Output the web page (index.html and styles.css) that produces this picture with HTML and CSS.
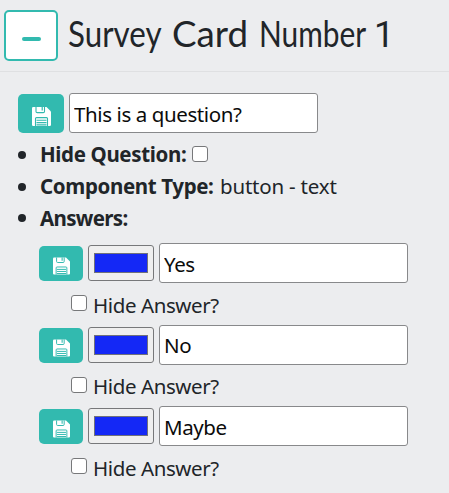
FILE: index.html
```html
<!DOCTYPE html>
<html lang="en">
<head>
<meta charset="utf-8">
<title>Survey Card</title>
<link rel="stylesheet" href="styles.css">
</head>
<body>
<svg class="defs" aria-hidden="true">
  <symbol id="save" viewBox="0 0 19 19">
    <path fill="#fff" d="M1.2 0H14.5L19 4.5V17.8Q19 19 17.8 19H1.2Q0 19 0 17.8V1.2Q0 0 1.2 0Z"/>
    <path fill="none" stroke="#32baaf" stroke-width="1.1" d="M4 0V4.4Q4 5.6 5.2 5.6H11.3Q12.5 5.6 12.5 4.4V0M3.5 19V11.6Q3.5 10.6 4.5 10.6H14.5Q15.5 10.6 15.5 11.6V19M4.5 13.3H14.5M4.5 15.6H14.5M4.5 17.9H14.5"/>
    <path fill="#32baaf" d="M9.6 0H10.8V3.6H9.6Z"/>
  </symbol>
</svg>
<header class="card-header">
  <button class="toggle" aria-label="Collapse"><span class="minus"></span></button>
  <h1><span class="w1">Survey</span><span class="w2">Card</span><span class="w3">Number</span><span class="w4">1</span></h1>
</header>
<main>
  <div class="question">
    <button class="save" aria-label="Save"><svg><use href="#save"/></svg></button>
    <input class="field" type="text" value="This is a question?">
  </div>
  <ul class="details">
    <li><b class="hide">Hide Question:</b><input class="check" type="checkbox" aria-label="Hide question"></li>
    <li><b class="type">Component Type:</b><span class="value">button - text</span></li>
    <li><b class="ans">Answers:</b></li>
  </ul>
  <section class="answers">
    <div class="answer">
      <div class="row"><button class="save" aria-label="Save"><svg><use href="#save"/></svg></button><button class="color" aria-label="Color"><span></span></button><input class="field" type="text" value="Yes"></div>
      <label><input class="check" type="checkbox"><span>Hide Answer?</span></label>
    </div>
    <div class="answer">
      <div class="row"><button class="save" aria-label="Save"><svg><use href="#save"/></svg></button><button class="color" aria-label="Color"><span></span></button><input class="field" type="text" value="No"></div>
      <label><input class="check" type="checkbox"><span>Hide Answer?</span></label>
    </div>
    <div class="answer">
      <div class="row"><button class="save" aria-label="Save"><svg><use href="#save"/></svg></button><button class="color" aria-label="Color"><span></span></button><input class="field" type="text" value="Maybe"></div>
      <label><input class="check" type="checkbox"><span>Hide Answer?</span></label>
    </div>
  </section>
</main>
</body>
</html>
```
FILE: styles.css
```css
* { box-sizing: border-box; }
body {
  margin: 0;
  height: 493px;
  overflow: hidden;
  background: #ecedef;
  color: #212529;
  font: 20.5px/32px "Noto Sans", "Open Sans", sans-serif;
  letter-spacing: -0.4px;
}
.defs { display: none; }
button { padding: 0; margin: 0; flex: none; }
.card-header {
  display: flex;
  height: 72px;
  padding: 10px 0 0 4px;
  border-bottom: 1px solid #dfe0e2;
}
.toggle {
  display: flex;
  align-items: center;
  justify-content: center;
  width: 54px;
  height: 51px;
  border: 2px solid #32baaf;
  border-radius: 5px;
  background: #fff;
}
.minus { width: 19px; height: 4px; margin-top: 6px; border-radius: 2px; background: #32baaf; }
h1 {
  display: flex;
  margin: -2px 0 0 10px;
  font: 400 36px/50px Lato, sans-serif;
  letter-spacing: 0;
  white-space: nowrap;
}
h1 span { flex: none; transform-origin: 0 50%; }
.w1 { width: 104px; transform: scaleX(.87); }
.w2 { width: 87px; transform: scaleX(1.02); }
.w3 { width: 118px; transform: scaleX(.83); }
.w4 { font-family: Roboto, sans-serif; transform: translate(-3px, 2px); }
main { padding-top: 21px; }
.question, .row { display: flex; align-items: center; }
.question { padding-left: 18px; }
.save {
  display: flex;
  justify-content: center;
  width: 46px;
  height: 39px;
  padding-top: 13px;
  border: 0;
  border-radius: 5px;
  background: #32baaf;
}
.save svg { width: 19px; height: 19px; }
.field {
  width: 249px;
  height: 40px;
  margin-left: 5px;
  padding: 1px 4px 0;
  border: 1px solid #88898b;
  border-radius: 3px;
  background: #fff;
  color: #0b0b0b;
  font: inherit;
  letter-spacing: inherit;
}
.details { margin: 6px 0 0; padding: 0; list-style: none; }
.details li { display: flex; align-items: center; height: 31.7px; padding-left: 18px; white-space: nowrap; }
.details li::before { content: ""; width: 8px; height: 8px; margin-right: 13px; border-radius: 50%; background: #212529; }
.details b { letter-spacing: -0.36px; padding-left: 1px; margin-top: -1px; }
.details .ans { letter-spacing: -0.65px; }
.value { margin-top: -1px; letter-spacing: -0.2px; }
.check {
  appearance: none;
  flex: none;
  width: 16px;
  height: 16px;
  margin: -2px 0 0 6px;
  border: 1px solid #77787a;
  border-radius: 3px;
  background: #fff;
}
.hide { width: 147px; }
.type { width: 181px; }
.answers { padding: 9px 0 0 39px; }
.answer { height: 81.5px; }
.row { height: 40px; }
.answers .save { width: 44px; height: 35px; margin-top: 1px; padding-top: 11px; }
.answers .save svg { width: 17px; height: 18px; }
.color {
  width: 66px;
  height: 36px;
  margin: 0 0 0 5px;
  padding: 7px 5px;
  border: 1px solid #77787a;
  border-radius: 3px;
  background: #efefef;
}
.color span { display: block; height: 20px; border: 1px solid #70717a; background: #1428f6; }
label { display: flex; align-items: center; height: 40px; padding-left: 26px; }
label span { margin-left: 6px; padding-top: 3px; }
label .check { margin-top: 0; }
```
